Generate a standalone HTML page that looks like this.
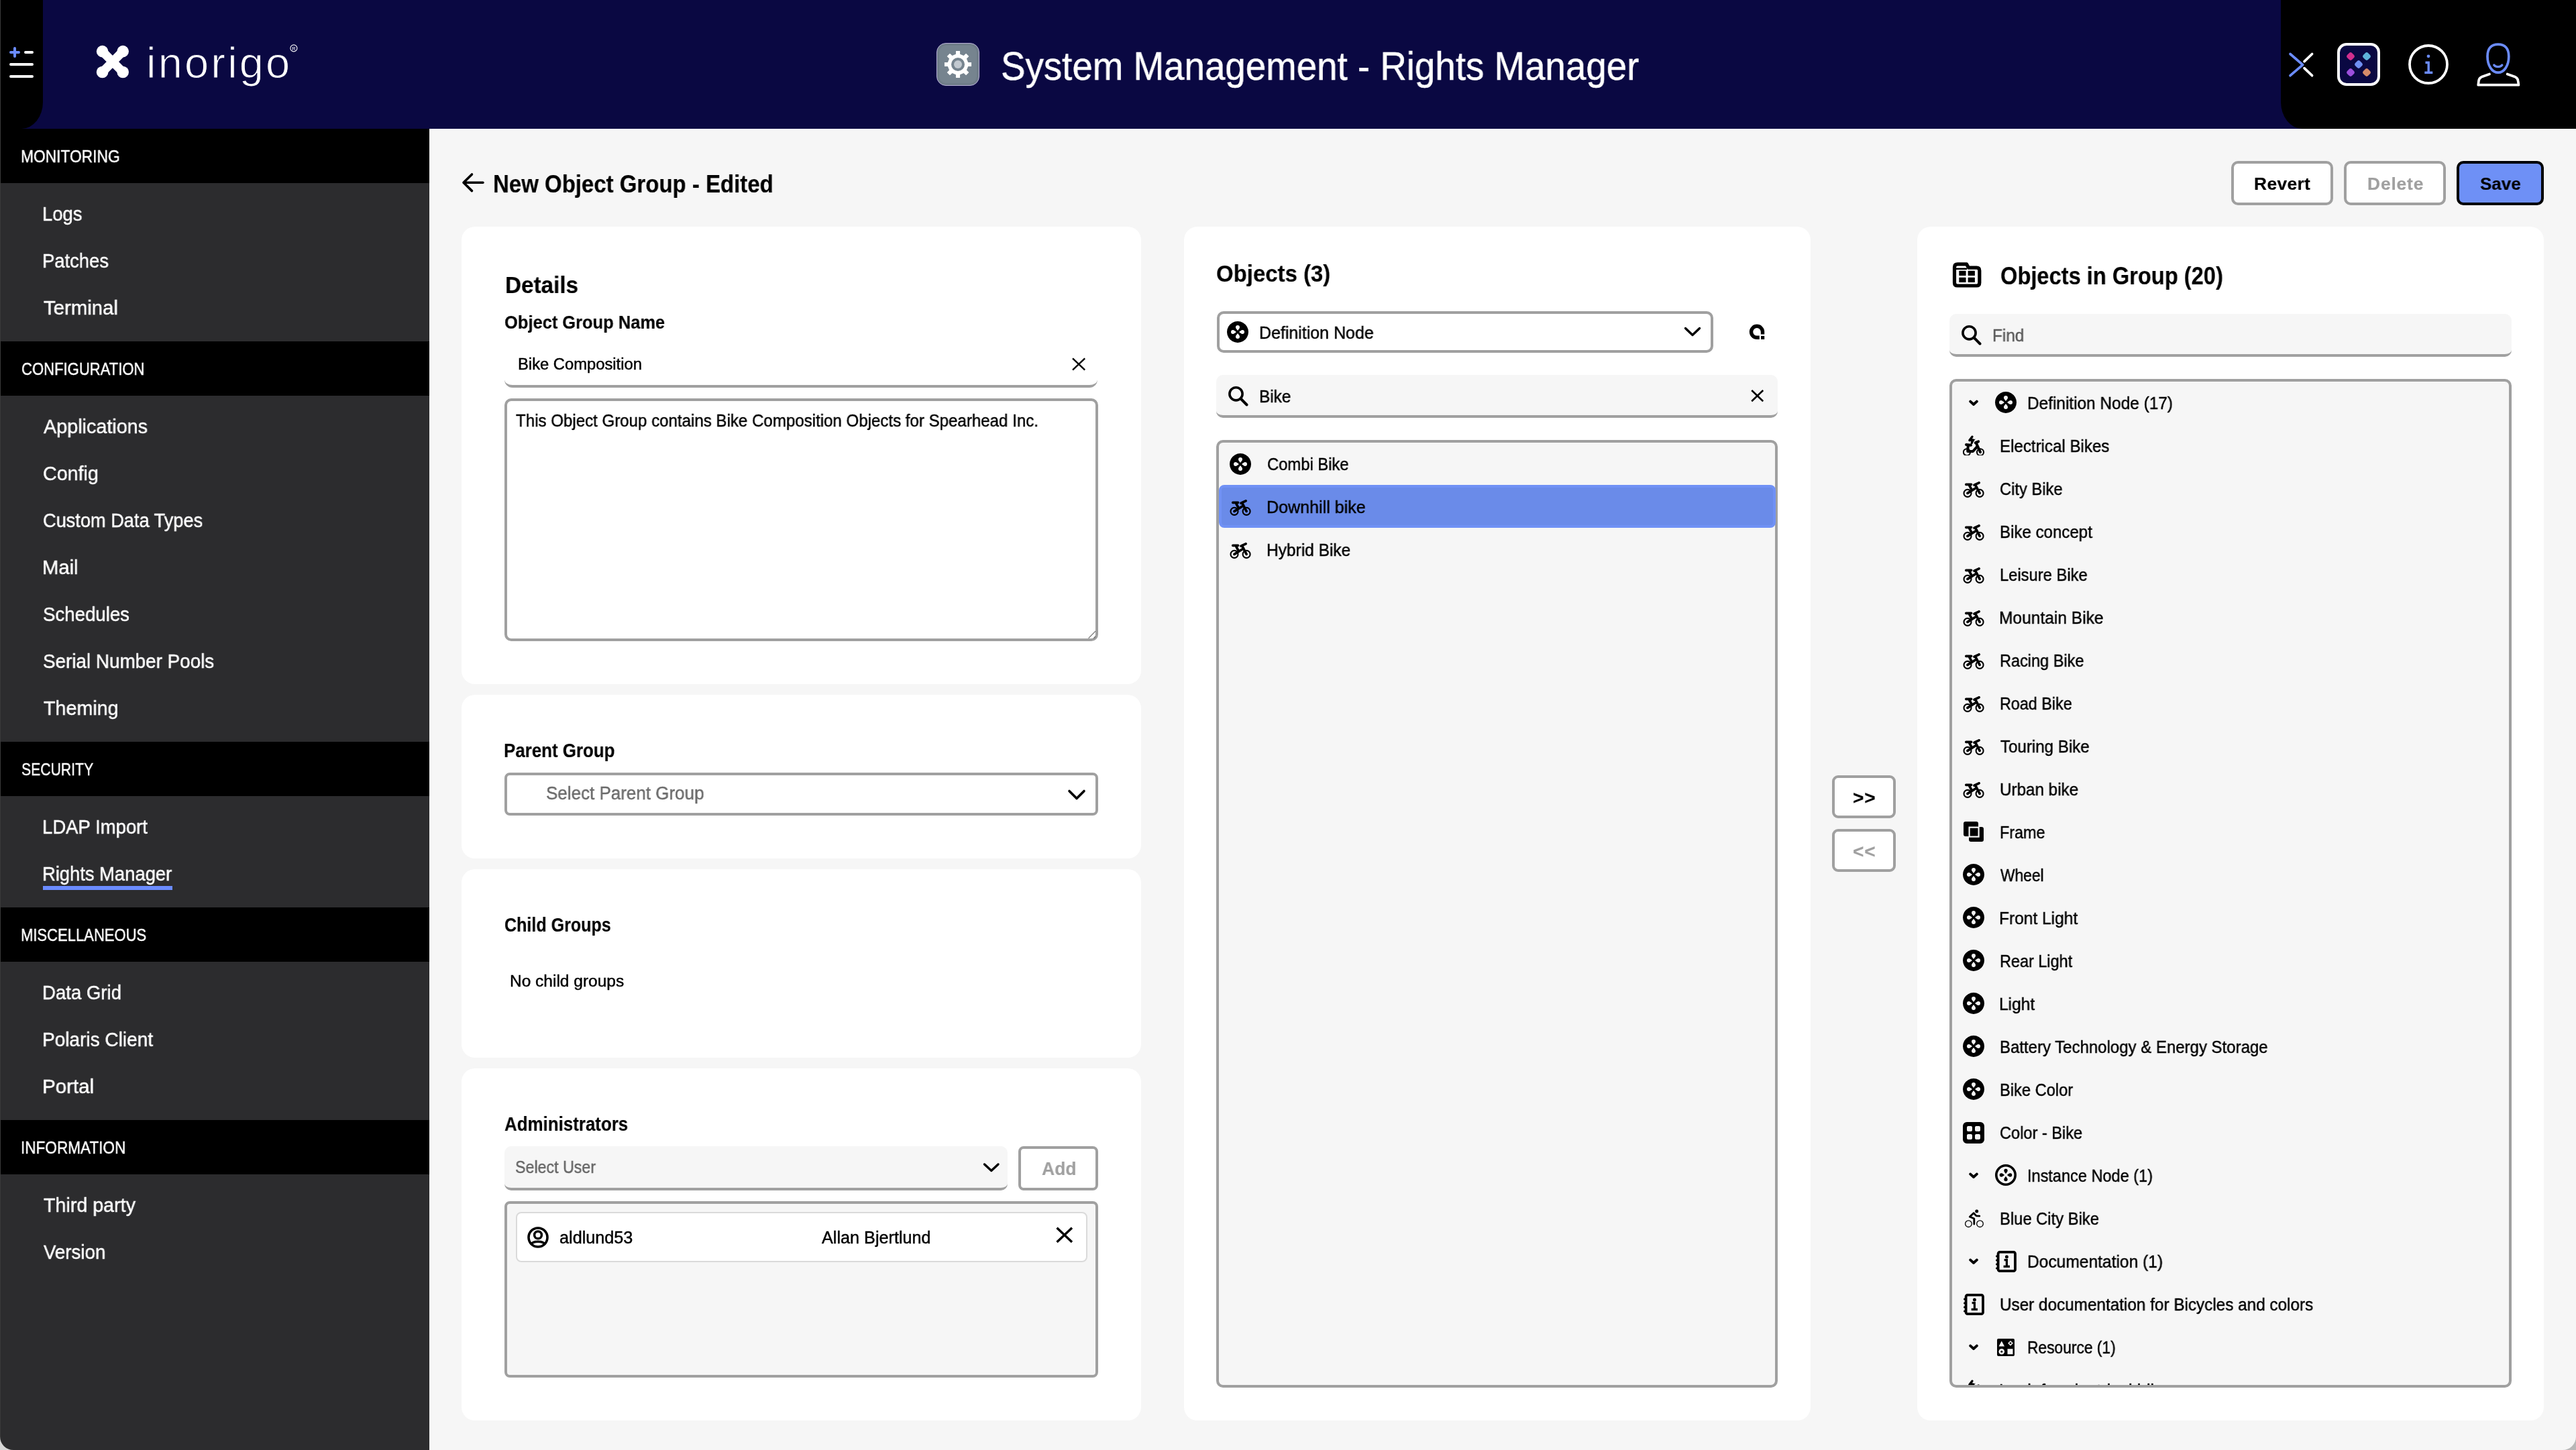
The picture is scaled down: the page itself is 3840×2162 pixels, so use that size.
<!DOCTYPE html>
<html><head><meta charset="utf-8"><title>System Management - Rights Manager</title>
<style>
html,body{margin:0;padding:0;width:3840px;height:2162px;overflow:hidden;background:#f6f6f6;font-family:"Liberation Sans",sans-serif;}
.a{position:absolute;box-sizing:border-box;}
.t{position:absolute;white-space:pre;font-family:"Liberation Sans",sans-serif;will-change:transform;}
svg{position:absolute;overflow:visible;}
</style></head><body>
<svg width="0" height="0" style="position:absolute;left:0;top:0"><defs><symbol id="i-def" viewBox="0 0 32 32"><path fill-rule="evenodd" d="M16 0a16 16 0 1 0 0.001 0ZM16.00 13.90C14.35 11.70 13.00 10.60 13.00 9.00A3.0 3.0 0 0 1 19.00 9.00C19.00 10.60 17.65 11.70 16.00 13.90ZM18.10 16.00C20.30 14.35 21.40 13.00 23.00 13.00A3.0 3.0 0 0 1 23.00 19.00C21.40 19.00 20.30 17.65 18.10 16.00ZM16.00 18.10C17.65 20.30 19.00 21.40 19.00 23.00A3.0 3.0 0 0 1 13.00 23.00C13.00 21.40 14.35 20.30 16.00 18.10ZM13.90 16.00C11.70 17.65 10.60 19.00 9.00 19.00A3.0 3.0 0 0 1 9.00 13.00C10.60 13.00 11.70 14.35 13.90 16.00Z" fill="#000"/></symbol><symbol id="i-inst" viewBox="0 0 32 32"><circle cx="16" cy="16" r="14.2" fill="none" stroke="#000" stroke-width="3.6"/><path d="M16.00 14.20C14.52 12.00 13.30 11.00 13.30 9.40A2.7 2.7 0 0 1 18.70 9.40C18.70 11.00 17.48 12.00 16.00 14.20ZM17.80 16.00C20.00 14.52 21.00 13.30 22.60 13.30A2.7 2.7 0 0 1 22.60 18.70C21.00 18.70 20.00 17.48 17.80 16.00ZM16.00 17.80C17.48 20.00 18.70 21.00 18.70 22.60A2.7 2.7 0 0 1 13.30 22.60C13.30 21.00 14.52 20.00 16.00 17.80ZM14.20 16.00C12.00 17.48 11.00 18.70 9.40 18.70A2.7 2.7 0 0 1 9.40 13.30C11.00 13.30 12.00 14.52 14.20 16.00Z" fill="#000"/></symbol><symbol id="i-bike" viewBox="0 0 32 24"><g fill="none" stroke="#000" stroke-linecap="round"><circle cx="7" cy="17.4" r="5.5" stroke-width="2.1"/><circle cx="25.1" cy="17.4" r="5.5" stroke-width="2.1"/><path d="M4.8 4.3H12.6M9.5 5.4L13.2 12.4M7 17.4L20.3 9M17 5.2L24.1 1.8M19.5 6.6L25.1 17.4" stroke-width="3.7"/></g></symbol><symbol id="i-ebike" viewBox="0 0 32 32"><g fill="none" stroke="#000" stroke-linecap="round" stroke-linejoin="round"><circle cx="5.9" cy="27.2" r="5" stroke-width="2.1"/><circle cx="26" cy="27.2" r="5" stroke-width="2.1"/><path d="M5 16L12 16.8M7.8 17L7.2 26H15L22 18.2M18.8 13.2L23.2 11.3M20.5 15.2L26 27.2" stroke-width="4"/></g><path d="M13.9 4.2L9.9 9.6L15.2 8.9L13.2 13.6" fill="none" stroke="#000" stroke-width="3.4" stroke-linejoin="round" stroke-linecap="round"/><path d="M11 9.8L18.8 7.6L14 13.8Z" fill="#000"/></symbol><symbol id="i-frame" viewBox="0 0 32 32"><rect x="1" y="0" width="22" height="22" rx="3" fill="#000"/><rect x="9" y="8" width="22" height="22" rx="3" fill="#000"/><rect x="9.6" y="8.6" width="14" height="14" fill="none" stroke="#f6f6f6" stroke-width="2.2"/></symbol><symbol id="i-grid" viewBox="0 0 32 32"><path fill-rule="evenodd" fill="#000" d="M6 0H26A6 6 0 0 1 32 6V26A6 6 0 0 1 26 32H6A6 6 0 0 1 0 26V6A6 6 0 0 1 6 0ZM8 6H12A2 2 0 0 1 14 8V12A2 2 0 0 1 12 14H8A2 2 0 0 1 6 12V8A2 2 0 0 1 8 6ZM20 6H24A2 2 0 0 1 26 8V12A2 2 0 0 1 24 14H20A2 2 0 0 1 18 12V8A2 2 0 0 1 20 6ZM8 18H12A2 2 0 0 1 14 20V24A2 2 0 0 1 12 26H8A2 2 0 0 1 6 24V20A2 2 0 0 1 8 18ZM20 18H24A2 2 0 0 1 26 20V24A2 2 0 0 1 24 26H20A2 2 0 0 1 18 24V20A2 2 0 0 1 20 18Z"/></symbol><symbol id="i-doc" viewBox="0 0 32 32"><rect x="4.6" y="1.9" width="25.4" height="28.3" rx="2.5" fill="none" stroke="#000" stroke-width="3.8"/><g fill="#000"><circle cx="2.6" cy="8" r="1.6"/><circle cx="2.6" cy="14" r="1.6"/><circle cx="2.6" cy="20" r="1.6"/><circle cx="2.6" cy="26" r="1.6"/><circle cx="17.4" cy="8.9" r="2.5"/></g><path d="M13.6 13.6H17.4V23.4M12.6 23.4H22" fill="none" stroke="#000" stroke-width="3.2"/></symbol><symbol id="i-res" viewBox="0 0 32 32"><rect x="3" y="3" width="26" height="26" rx="2" fill="#000"/><path d="M5.5 14.6L9.8 6.5L14.1 14.6Z M23 5.9L26.9 9.8L23 13.7L19.1 9.8Z M18.5 18.2H26.5V26.2H18.5Z" fill="#f6f6f6"/><circle cx="9.8" cy="22.2" r="4.3" fill="#f6f6f6"/><circle cx="9.8" cy="22.2" r="1.5" fill="#000"/><path d="M23 8L24.8 9.8L23 11.6L21.2 9.8Z" fill="#000"/></symbol><symbol id="i-cyc" viewBox="0 0 32 32"><g fill="none" stroke="#000"><circle cx="8.4" cy="23.7" r="4.8" stroke-width="1.3"/><circle cx="25.5" cy="23.7" r="4.8" stroke-width="1.3"/><path d="M10.3 13.3L16.1 7.8L20 11.9L24.8 12.1M11.7 13.8L16.8 16L16.8 24.2" stroke-width="2.8" stroke-linecap="round" stroke-linejoin="round"/></g><circle cx="20.7" cy="5.1" r="2.5" fill="#000"/></symbol><symbol id="i-search" viewBox="0 0 32 32"><circle cx="13.5" cy="13.3" r="9.6" fill="none" stroke="#000" stroke-width="3.6"/><path d="M20.6 20.5L29.5 29.5" stroke="#000" stroke-width="4" stroke-linecap="round"/></symbol><symbol id="i-chev" viewBox="0 0 16 10"><path d="M3.2 2.6L8 7L12.8 2.6" fill="none" stroke="#000" stroke-width="3.9" stroke-linecap="round" stroke-linejoin="round"/></symbol></defs></svg>
<div class="a" style="left:0px;top:0px;width:3840px;height:192px;background:#0a0842"></div>
<div class="a" style="left:0px;top:0px;width:64px;height:192px;background:#000;border-bottom-right-radius:32px 40px"></div>
<div class="a" style="left:3400px;top:0px;width:440px;height:192px;background:#000;border-bottom-left-radius:32px 40px"></div>
<svg style="left:0px;top:0px;" width="64" height="192" viewBox="0 0 64 192"><g stroke-linecap="round" stroke-width="4" fill="none"><path d="M16 78H28M22 72V84" stroke="#6b8cff"/><path d="M38 78H48M16 96H48M16 114H48" stroke="#fff"/></g></svg>
<svg style="left:136px;top:60px;" width="64" height="64" viewBox="136 60 64 64"><g fill="#fff"><circle cx="152.6" cy="76.6" r="8.8"/><circle cx="183.2" cy="76.6" r="8.8"/><circle cx="152.6" cy="107.5" r="8.8"/><circle cx="183.2" cy="107.5" r="8.8"/></g><path d="M152.6 76.6L183.2 107.5M183.2 76.6L152.6 107.5" stroke="#fff" stroke-width="13"/></svg>
<div class="t" style="left:217.70px;top:61.13px;font-size:65px;line-height:65px;font-weight:400;color:#fff;letter-spacing:3.187px;-webkit-text-stroke-width:0.45px;-webkit-text-stroke:1.1px #0a0842;">inorigo</div>
<svg style="left:428px;top:62px;" width="20" height="20" viewBox="428 62 20 20"><circle cx="437.9" cy="71.9" r="5" fill="none" stroke="#fff" stroke-width="1.1"/><text x="435.3" y="74.9" font-size="7.5" font-family="Liberation Sans" fill="#fff">R</text></svg>
<div class="a" style="left:1396px;top:64px;width:64px;height:64px;background:#76848f;border:1.5px solid #b6aed6;border-radius:14px;box-shadow:inset 0 0 0 3px #6f7d88"></div>
<svg style="left:1396px;top:64px;" width="64" height="64" viewBox="1396 64 64 64"><path d="M1424.88 80.82 L1424.97 75.93 L1431.03 75.93 L1431.12 80.82 L1436.53 83.06 L1440.05 79.66 L1444.34 83.95 L1440.94 87.47 L1443.18 92.88 L1448.07 92.97 L1448.07 99.03 L1443.18 99.12 L1440.94 104.53 L1444.34 108.05 L1440.05 112.34 L1436.53 108.94 L1431.12 111.18 L1431.03 116.07 L1424.97 116.07 L1424.88 111.18 L1419.47 108.94 L1415.95 112.34 L1411.66 108.05 L1415.06 104.53 L1412.82 99.12 L1407.93 99.03 L1407.93 92.97 L1412.82 92.88 L1415.06 87.47 L1411.66 83.95 L1415.95 79.66 L1419.47 83.06Z" fill="#fff"/><circle cx="1428" cy="96" r="10" fill="#76848f"/><circle cx="1428" cy="96" r="6" fill="#c2c9d0"/></svg>
<div class="t" style="left:1492.14px;top:70.29px;font-size:58.7px;line-height:58.7px;font-weight:400;color:#fff;letter-spacing:0.000px;transform:scaleX(0.9318);transform-origin:0 0;-webkit-text-stroke-width:0.45px;">System Management - Rights Manager</div>
<svg style="left:3400px;top:60px;" width="380" height="80" viewBox="3400 60 380 80"><g fill="none" stroke-linecap="round" stroke-linejoin="round" stroke-width="3.7"><path d="M3414 80.5L3432.7 96.6L3414 112.7" stroke="#6b8cff"/><path d="M3446.6 80.5L3435 91.6M3435 101.6L3446.6 112.7" stroke="#fff"/></g><rect x="3486" y="66" width="60" height="60" rx="12" fill="#0a0842" stroke="#fff" stroke-width="4"/><g><rect x="3499" y="79" width="10" height="10" rx="3.2" fill="#d12f8e" transform="rotate(45 3504 84)"/><rect x="3523" y="79" width="10" height="10" rx="3.2" fill="#5eb3d9" transform="rotate(45 3528 84)"/><rect x="3511" y="91" width="10" height="10" rx="3.2" fill="#6f8ff2" transform="rotate(45 3516 96)"/><rect x="3499" y="103" width="10" height="10" rx="3.2" fill="#9c4fdc" transform="rotate(45 3504 108)"/><rect x="3523" y="103" width="10" height="10" rx="3.2" fill="#d58b69" transform="rotate(45 3528 108)"/></g><circle cx="3620" cy="96" r="28" fill="none" stroke="#fff" stroke-width="3.8"/><circle cx="3620" cy="83.8" r="2.4" fill="#6b8cff"/><path d="M3615.5 93.3H3620.2V108.3M3614.3 108.3H3626.3" fill="none" stroke="#6b8cff" stroke-width="3.4"/><path d="M3723.9 66.2C3714 66.2 3708 72 3708 84C3708 98 3715 108.2 3723.9 108.2C3732.8 108.2 3739.8 98 3739.8 84C3739.8 72 3733.8 66.2 3723.9 66.2Z" fill="none" stroke="#6b8cff" stroke-width="3.7"/><path d="M3717.8 97C3720.5 100.5 3727 100.5 3729.8 97" fill="none" stroke="#6b8cff" stroke-width="3.4" stroke-linecap="round"/><path d="M3711 110.5L3699 114.8C3696.5 116 3695.3 118 3695 120.5L3694.2 126.7H3754.5L3753.6 120.5C3753.3 118 3752.1 116 3749.6 114.8L3737.6 110.5" fill="none" stroke="#fff" stroke-width="3.7" stroke-linejoin="round" stroke-linecap="round"/></svg>
<div class="a" style="left:0px;top:192px;width:640px;height:1970px;background:#2c2c2e"></div>
<div class="a" style="left:0px;top:192.0px;width:640px;height:80.7px;background:#000"></div>
<div class="t" style="left:30.61px;top:220.50px;font-size:25.51px;line-height:25.51px;font-weight:400;color:#fff;letter-spacing:0.000px;transform:scaleX(0.8932);transform-origin:0 0;-webkit-text-stroke-width:0.45px;">MONITORING</div>
<div class="t" style="left:63.37px;top:304.15px;font-size:30.0px;line-height:30.0px;font-weight:400;color:#fff;letter-spacing:0.000px;transform:scaleX(0.9153);transform-origin:0 0;-webkit-text-stroke-width:0.45px;">Logs</div>
<div class="t" style="left:63.37px;top:374.15px;font-size:30.0px;line-height:30.0px;font-weight:400;color:#fff;letter-spacing:0.000px;transform:scaleX(0.9127);transform-origin:0 0;-webkit-text-stroke-width:0.45px;">Patches</div>
<div class="t" style="left:65.20px;top:444.15px;font-size:30.0px;line-height:30.0px;font-weight:400;color:#fff;letter-spacing:0.000px;transform:scaleX(0.9785);transform-origin:0 0;-webkit-text-stroke-width:0.45px;">Terminal</div>
<div class="a" style="left:0px;top:509.0px;width:640px;height:80.7px;background:#000"></div>
<div class="t" style="left:31.53px;top:537.50px;font-size:25.51px;line-height:25.51px;font-weight:400;color:#fff;letter-spacing:0.000px;transform:scaleX(0.8654);transform-origin:0 0;-webkit-text-stroke-width:0.45px;">CONFIGURATION</div>
<div class="t" style="left:65.20px;top:621.15px;font-size:30.0px;line-height:30.0px;font-weight:400;color:#fff;letter-spacing:0.000px;transform:scaleX(0.9586);transform-origin:0 0;-webkit-text-stroke-width:0.45px;">Applications</div>
<div class="t" style="left:64.24px;top:691.15px;font-size:30.0px;line-height:30.0px;font-weight:400;color:#fff;letter-spacing:0.000px;transform:scaleX(0.9556);transform-origin:0 0;-webkit-text-stroke-width:0.45px;">Config</div>
<div class="t" style="left:64.29px;top:761.15px;font-size:30.0px;line-height:30.0px;font-weight:400;color:#fff;letter-spacing:0.000px;transform:scaleX(0.9058);transform-origin:0 0;-webkit-text-stroke-width:0.45px;">Custom Data Types</div>
<div class="t" style="left:63.25px;top:831.15px;font-size:30.0px;line-height:30.0px;font-weight:400;color:#fff;letter-spacing:0.000px;transform:scaleX(0.9739);transform-origin:0 0;-webkit-text-stroke-width:0.45px;">Mail</div>
<div class="t" style="left:64.28px;top:901.15px;font-size:30.0px;line-height:30.0px;font-weight:400;color:#fff;letter-spacing:0.000px;transform:scaleX(0.9211);transform-origin:0 0;-webkit-text-stroke-width:0.45px;">Schedules</div>
<div class="t" style="left:64.27px;top:971.15px;font-size:30.0px;line-height:30.0px;font-weight:400;color:#fff;letter-spacing:0.000px;transform:scaleX(0.9278);transform-origin:0 0;-webkit-text-stroke-width:0.45px;">Serial Number Pools</div>
<div class="t" style="left:65.20px;top:1041.15px;font-size:30.0px;line-height:30.0px;font-weight:400;color:#fff;letter-spacing:0.000px;transform:scaleX(0.9562);transform-origin:0 0;-webkit-text-stroke-width:0.45px;">Theming</div>
<div class="a" style="left:0px;top:1106.0px;width:640px;height:80.7px;background:#000"></div>
<div class="t" style="left:31.57px;top:1134.50px;font-size:25.51px;line-height:25.51px;font-weight:400;color:#fff;letter-spacing:0.000px;transform:scaleX(0.8310);transform-origin:0 0;-webkit-text-stroke-width:0.45px;">SECURITY</div>
<div class="t" style="left:63.37px;top:1218.15px;font-size:30.0px;line-height:30.0px;font-weight:400;color:#fff;letter-spacing:0.000px;transform:scaleX(0.9173);transform-origin:0 0;-webkit-text-stroke-width:0.45px;">LDAP Import</div>
<div class="t" style="left:63.38px;top:1288.15px;font-size:30.0px;line-height:30.0px;font-weight:400;color:#fff;letter-spacing:0.000px;transform:scaleX(0.9124);transform-origin:0 0;-webkit-text-stroke-width:0.45px;">Rights Manager</div>
<div class="a" style="left:64px;top:1320.9px;width:193px;height:6px;background:#6b8cff"></div>
<div class="a" style="left:0px;top:1353.0px;width:640px;height:80.7px;background:#000"></div>
<div class="t" style="left:30.67px;top:1381.50px;font-size:25.51px;line-height:25.51px;font-weight:400;color:#fff;letter-spacing:0.000px;transform:scaleX(0.8634);transform-origin:0 0;-webkit-text-stroke-width:0.45px;">MISCELLANEOUS</div>
<div class="t" style="left:63.36px;top:1465.15px;font-size:30.0px;line-height:30.0px;font-weight:400;color:#fff;letter-spacing:0.000px;transform:scaleX(0.9190);transform-origin:0 0;-webkit-text-stroke-width:0.45px;">Data Grid</div>
<div class="t" style="left:63.33px;top:1535.15px;font-size:30.0px;line-height:30.0px;font-weight:400;color:#fff;letter-spacing:0.000px;transform:scaleX(0.9339);transform-origin:0 0;-webkit-text-stroke-width:0.45px;">Polaris Client</div>
<div class="t" style="left:63.23px;top:1605.15px;font-size:30.0px;line-height:30.0px;font-weight:400;color:#fff;letter-spacing:0.000px;transform:scaleX(0.9839);transform-origin:0 0;-webkit-text-stroke-width:0.45px;">Portal</div>
<div class="a" style="left:0px;top:1670.0px;width:640px;height:80.7px;background:#000"></div>
<div class="t" style="left:30.63px;top:1698.50px;font-size:25.51px;line-height:25.51px;font-weight:400;color:#fff;letter-spacing:0.000px;transform:scaleX(0.8852);transform-origin:0 0;-webkit-text-stroke-width:0.45px;">INFORMATION</div>
<div class="t" style="left:65.20px;top:1782.15px;font-size:30.0px;line-height:30.0px;font-weight:400;color:#fff;letter-spacing:0.000px;transform:scaleX(0.9548);transform-origin:0 0;-webkit-text-stroke-width:0.45px;">Third party</div>
<div class="t" style="left:65.20px;top:1852.15px;font-size:30.0px;line-height:30.0px;font-weight:400;color:#fff;letter-spacing:0.000px;transform:scaleX(0.9219);transform-origin:0 0;-webkit-text-stroke-width:0.45px;">Version</div>
<svg style="left:680px;top:250px;" width="50" height="44" viewBox="680 250 50 44"><path d="M720 272.3H691.5M703.5 260L691 272.3L703.5 284.6" fill="none" stroke="#000" stroke-width="3.6" stroke-linecap="round" stroke-linejoin="round"/></svg>
<div class="t" style="left:734.72px;top:255.82px;font-size:37.1px;line-height:37.1px;font-weight:700;color:#000;letter-spacing:0.000px;transform:scaleX(0.8894);transform-origin:0 0;-webkit-text-stroke-width:0.2px;">New Object Group - Edited</div>
<div class="a" style="left:3326px;top:240px;width:152px;height:66px;background:#fff;border:4px solid #a0a0a0;border-radius:10px"></div>
<div class="t" style="left:3360.00px;top:260.87px;font-size:26.38px;line-height:26.38px;font-weight:700;color:#000;letter-spacing:0.337px;-webkit-text-stroke-width:0.2px;">Revert</div>
<div class="a" style="left:3494px;top:240px;width:152px;height:66px;background:#fff;border:4px solid #a0a0a0;border-radius:10px"></div>
<div class="t" style="left:3528.60px;top:260.87px;font-size:26.38px;line-height:26.38px;font-weight:700;color:#a0a0a0;letter-spacing:0.841px;-webkit-text-stroke-width:0.2px;">Delete</div>
<div class="a" style="left:3662px;top:240px;width:130px;height:66px;background:#6e90f6;border:4px solid #000;border-radius:10px"></div>
<div class="t" style="left:3697.00px;top:260.87px;font-size:26.38px;line-height:26.38px;font-weight:700;color:#000;letter-spacing:0.000px;transform:scaleX(0.9848);transform-origin:0 0;-webkit-text-stroke-width:0.2px;">Save</div>
<div class="a" style="left:688px;top:338px;width:1013px;height:682px;background:#fff;border-radius:20px"></div>
<div class="a" style="left:688px;top:1036px;width:1013px;height:244px;background:#fff;border-radius:20px"></div>
<div class="a" style="left:688px;top:1296px;width:1013px;height:281px;background:#fff;border-radius:20px"></div>
<div class="a" style="left:688px;top:1593px;width:1013px;height:525px;background:#fff;border-radius:20px"></div>
<div class="a" style="left:1765px;top:338px;width:934px;height:1780px;background:#fff;border-radius:20px"></div>
<div class="a" style="left:2858px;top:338px;width:934px;height:1780px;background:#fff;border-radius:20px"></div>
<div class="t" style="left:752.66px;top:408.12px;font-size:34.35px;line-height:34.35px;font-weight:700;color:#000;letter-spacing:0.000px;transform:scaleX(0.9682);transform-origin:0 0;-webkit-text-stroke-width:0.2px;">Details</div>
<div class="t" style="left:752.16px;top:468.29px;font-size:26.96px;line-height:26.96px;font-weight:700;color:#000;letter-spacing:0.000px;transform:scaleX(0.9448);transform-origin:0 0;-webkit-text-stroke-width:0.2px;">Object Group Name</div>
<div class="a" style="left:752px;top:518px;width:884px;height:60px;border-bottom:4px solid #a0a0a0;border-radius:0 0 12px 12px"></div>
<div class="t" style="left:772.30px;top:531.05px;font-size:23.77px;line-height:23.77px;font-weight:400;color:#000;letter-spacing:0.000px;transform:scaleX(1.0000);transform-origin:0 0;-webkit-text-stroke-width:0.45px;">Bike Composition</div>
<svg style="left:1590px;top:525px;" width="36" height="36" viewBox="1590 525 36 36"><path d="M1599 534.3L1617.2 551.7M1617.2 534.3L1599 551.7" stroke="#000" stroke-width="2.4" fill="none"/></svg>
<div class="a" style="left:752px;top:594px;width:885px;height:362px;border:4px solid #a0a0a0;border-radius:10px"></div>
<div class="t" style="left:769.00px;top:614.54px;font-size:25.22px;line-height:25.22px;font-weight:400;color:#000;letter-spacing:0.000px;transform:scaleX(0.9548);transform-origin:0 0;-webkit-text-stroke-width:0.45px;">This Object Group contains Bike Composition Objects for Spearhead Inc.</div>
<svg style="left:1610px;top:930px;" width="26" height="26" viewBox="1610 930 26 26"><path d="M1622.6 951.6L1633 941.2M1630.3 951.8L1633 949" stroke="#6a6a6a" stroke-width="1.2" fill="none"/></svg>
<div class="t" style="left:750.67px;top:1104.07px;font-size:29.86px;line-height:29.86px;font-weight:700;color:#000;letter-spacing:0.000px;transform:scaleX(0.8671);transform-origin:0 0;-webkit-text-stroke-width:0.2px;">Parent Group</div>
<div class="a" style="left:752px;top:1152px;width:885px;height:64px;border:4px solid #a0a0a0;border-radius:8px"></div>
<div class="t" style="left:813.83px;top:1170.41px;font-size:26.81px;line-height:26.81px;font-weight:400;color:#6b6b6b;letter-spacing:0.000px;transform:scaleX(0.9697);transform-origin:0 0;-webkit-text-stroke-width:0.45px;">Select Parent Group</div>
<svg style="left:1585px;top:1170px;" width="40" height="30" viewBox="1585 1170 40 30"><path d="M1594 1179.5L1605 1190.5L1616 1179.5" stroke="#000" stroke-width="3.6" fill="none" stroke-linecap="round" stroke-linejoin="round"/></svg>
<div class="t" style="left:751.56px;top:1364.07px;font-size:29.86px;line-height:29.86px;font-weight:700;color:#000;letter-spacing:0.000px;transform:scaleX(0.8390);transform-origin:0 0;-webkit-text-stroke-width:0.2px;">Child Groups</div>
<div class="t" style="left:760.00px;top:1451.35px;font-size:24.49px;line-height:24.49px;font-weight:400;color:#000;letter-spacing:0.000px;transform:scaleX(0.9983);transform-origin:0 0;-webkit-text-stroke-width:0.45px;">No child groups</div>
<div class="t" style="left:751.90px;top:1661.84px;font-size:28.7px;line-height:28.7px;font-weight:700;color:#000;letter-spacing:0.000px;transform:scaleX(0.9026);transform-origin:0 0;-webkit-text-stroke-width:0.2px;">Administrators</div>
<div class="a" style="left:752px;top:1709px;width:750px;height:66px;background:#f6f6f6;border-bottom:4px solid #a0a0a0;border-radius:10px"></div>
<div class="t" style="left:768.19px;top:1727.70px;font-size:25.51px;line-height:25.51px;font-weight:400;color:#666666;letter-spacing:0.000px;transform:scaleX(0.9109);transform-origin:0 0;-webkit-text-stroke-width:0.45px;">Select User</div>
<svg style="left:1460px;top:1728px;" width="36" height="26" viewBox="1460 1728 36 26"><path d="M1467.5 1736L1477.8 1745.5L1488 1736" stroke="#000" stroke-width="3.4" fill="none" stroke-linecap="round" stroke-linejoin="round"/></svg>
<div class="a" style="left:1518px;top:1709px;width:119px;height:66px;background:#fff;border:4px solid #a0a0a0;border-radius:8px"></div>
<div class="t" style="left:1552.80px;top:1728.60px;font-size:27.54px;line-height:27.54px;font-weight:700;color:#a0a0a0;letter-spacing:0.000px;transform:scaleX(0.9613);transform-origin:0 0;-webkit-text-stroke-width:0.2px;">Add</div>
<div class="a" style="left:752px;top:1791px;width:885px;height:263px;background:#f6f6f6;border:4px solid #a0a0a0;border-radius:8px"></div>
<div class="a" style="left:769px;top:1807px;width:852px;height:75px;background:#fff;border:2.5px solid #dadada;border-radius:8px"></div>
<svg style="left:780px;top:1822px;" width="46" height="46" viewBox="780 1822 46 46"><circle cx="802" cy="1845" r="14" fill="none" stroke="#000" stroke-width="3.6"/><circle cx="802" cy="1841.4" r="5.4" fill="none" stroke="#000" stroke-width="3.5"/><path d="M791 1855.8C795 1849.8 809 1849.8 813 1855.8" fill="none" stroke="#000" stroke-width="3.4"/></svg>
<div class="t" style="left:834.20px;top:1832.84px;font-size:25.22px;line-height:25.22px;font-weight:400;color:#000;letter-spacing:0.000px;transform:scaleX(0.9985);transform-origin:0 0;-webkit-text-stroke-width:0.45px;">aldlund53</div>
<div class="t" style="left:1225.00px;top:1832.84px;font-size:25.22px;line-height:25.22px;font-weight:400;color:#000;letter-spacing:0.000px;transform:scaleX(0.9994);transform-origin:0 0;-webkit-text-stroke-width:0.45px;">Allan Bjertlund</div>
<svg style="left:1568px;top:1824px;" width="38" height="36" viewBox="1568 1824 38 36"><path d="M1575.5 1830.8L1598 1852M1598 1830.8L1575.5 1852" stroke="#000" stroke-width="3.4" fill="none"/></svg>
<div class="t" style="left:1813.08px;top:391.23px;font-size:35.65px;line-height:35.65px;font-weight:700;color:#000;letter-spacing:0.000px;transform:scaleX(0.9242);transform-origin:0 0;-webkit-text-stroke-width:0.2px;">Objects (3)</div>
<div class="a" style="left:1814px;top:464px;width:740px;height:62px;background:#fff;border:4px solid #a0a0a0;border-radius:10px"></div>
<svg style="left:1828.8px;top:479px" width="32" height="32"><use href="#i-def" x="0" y="0" width="32" height="32"/></svg>
<div class="t" style="left:1877.32px;top:483.94px;font-size:25.22px;line-height:25.22px;font-weight:400;color:#000;letter-spacing:0.000px;transform:scaleX(0.9899);transform-origin:0 0;-webkit-text-stroke-width:0.45px;">Definition Node</div>
<svg style="left:2505px;top:482px;" width="36" height="24" viewBox="2505 482 36 24"><path d="M2512.5 489.5L2523 499.5L2533.5 489.5" stroke="#000" stroke-width="3.4" fill="none" stroke-linecap="round" stroke-linejoin="round"/></svg>
<svg style="left:2600px;top:478px;" width="40" height="34" viewBox="2600 478 40 34"><path d="M2622.8 503.3H2619A8.5 8.5 0 1 1 2627.5 494.8V498.6" fill="none" stroke="#000" stroke-width="5.4"/><rect x="2625" y="500.9" width="5.2" height="5.1" fill="#000"/></svg>
<div class="a" style="left:1813px;top:559px;width:837px;height:64px;background:#f6f6f6;border-bottom:4px solid #a0a0a0;border-radius:10px"></div>
<svg style="left:1828.8px;top:574px" width="32" height="32"><use href="#i-search" x="0" y="0" width="32" height="32"/></svg>
<div class="t" style="left:1877.26px;top:579.07px;font-size:25.07px;line-height:25.07px;font-weight:400;color:#000;letter-spacing:0.000px;transform:scaleX(0.9713);transform-origin:0 0;-webkit-text-stroke-width:0.45px;">Bike</div>
<svg style="left:2600px;top:575px;" width="36" height="30" viewBox="2600 575 36 30"><path d="M2611.2 582L2628.2 598.2M2628.2 582L2611.2 598.2" stroke="#000" stroke-width="2.6" fill="none"/></svg>
<div class="a" style="left:1813px;top:656px;width:837px;height:1413px;background:#f6f6f6;border:4px solid #a0a0a0;border-radius:10px"></div>
<div class="a" style="left:1817px;top:723px;width:829.5px;height:64px;background:#6a8be9;border:4px solid #7091f5;border-radius:8px"></div>
<svg style="left:1832.7px;top:676px" width="32" height="32"><use href="#i-def" x="0" y="0" width="32" height="32"/></svg>
<div class="t" style="left:1888.97px;top:679.58px;font-size:25.65px;line-height:25.65px;font-weight:400;color:#000;letter-spacing:0.000px;transform:scaleX(0.9273);transform-origin:0 0;-webkit-text-stroke-width:0.45px;">Combi Bike</div>
<svg style="left:1832.7px;top:745px" width="32" height="24"><use href="#i-bike" x="0" y="0" width="32" height="24"/></svg>
<div class="t" style="left:1887.94px;top:743.58px;font-size:25.65px;line-height:25.65px;font-weight:400;color:#000;letter-spacing:0.000px;transform:scaleX(0.9778);transform-origin:0 0;-webkit-text-stroke-width:0.45px;">Downhill bike</div>
<svg style="left:1832.7px;top:809px" width="32" height="24"><use href="#i-bike" x="0" y="0" width="32" height="24"/></svg>
<div class="t" style="left:1887.99px;top:807.58px;font-size:25.65px;line-height:25.65px;font-weight:400;color:#000;letter-spacing:0.000px;transform:scaleX(0.9555);transform-origin:0 0;-webkit-text-stroke-width:0.45px;">Hybrid Bike</div>
<div class="a" style="left:2731px;top:1156px;width:95px;height:64px;background:#fff;border:4px solid #a0a0a0;border-radius:9px"></div>
<div class="a" style="left:2731px;top:1236px;width:95px;height:64px;background:#fff;border:4px solid #a0a0a0;border-radius:9px"></div>
<div class="t" style="left:2761.80px;top:1175.82px;font-size:28px;line-height:28px;font-weight:700;color:#000;letter-spacing:0.848px;-webkit-text-stroke-width:0.2px;">&gt;&gt;</div>
<div class="t" style="left:2761.80px;top:1255.82px;font-size:28px;line-height:28px;font-weight:700;color:#a0a0a0;letter-spacing:0.848px;-webkit-text-stroke-width:0.2px;">&lt;&lt;</div>
<svg style="left:2905px;top:385px;" width="55" height="50" viewBox="2905 385 55 50"><path d="M2913.5 421.5V398.5C2913.5 395.5 2915.2 393.8 2918.2 393.8H2931.5L2934.5 399.2H2946.5C2949.2 399.2 2950.8 400.8 2950.8 403.5V421.5C2950.8 424.5 2949.2 426 2946.5 426H2918C2915.2 426 2913.5 424.5 2913.5 421.5Z" fill="none" stroke="#000" stroke-width="5.2" stroke-linejoin="round"/><path d="M2914 400.8H2932" stroke="#000" stroke-width="2.6"/><g fill="#000"><rect x="2920.3" y="403.8" width="10.3" height="7.3" rx="0.6"/><rect x="2933.6" y="403.8" width="10.3" height="7.3" rx="0.6"/><rect x="2920.3" y="413.8" width="10.3" height="7.3" rx="0.6"/><rect x="2933.6" y="413.8" width="10.3" height="7.3" rx="0.6"/></g></svg>
<div class="t" style="left:2982.01px;top:394.31px;font-size:36.52px;line-height:36.52px;font-weight:700;color:#000;letter-spacing:0.000px;transform:scaleX(0.8937);transform-origin:0 0;-webkit-text-stroke-width:0.2px;">Objects in Group (20)</div>
<div class="a" style="left:2906px;top:468px;width:838px;height:64px;background:#f6f6f6;border-bottom:4px solid #a0a0a0;border-radius:10px"></div>
<svg style="left:2921.5px;top:483px" width="32" height="32"><use href="#i-search" x="0" y="0" width="32" height="32"/></svg>
<div class="t" style="left:2970.16px;top:487.97px;font-size:25.07px;line-height:25.07px;font-weight:400;color:#5c5c5c;letter-spacing:0.000px;transform:scaleX(0.9713);transform-origin:0 0;-webkit-text-stroke-width:0.45px;">Find</div>
<div class="a" style="left:2906px;top:564.6px;width:838px;height:1504px;background:#f6f6f6;border:4px solid #a0a0a0;border-radius:10px"></div>
<div class="a" style="left:0;top:0;width:3840px;height:2162px;clip-path:inset(568.6px 0 97.5px 0)">
<svg style="left:2934px;top:595.6px" width="16" height="10"><use href="#i-chev" x="0" y="0" width="16" height="10"/></svg>
<svg style="left:2974px;top:583.8000000000001px" width="32" height="32"><use href="#i-def" x="0" y="0" width="32" height="32"/></svg>
<div class="t" style="left:3022.28px;top:588.92px;font-size:25.36px;line-height:25.36px;font-weight:400;color:#000;letter-spacing:0.000px;transform:scaleX(0.9622);transform-origin:0 0;-webkit-text-stroke-width:0.45px;">Definition Node (17)</div>
<svg style="left:2925.7px;top:647.3000000000001px" width="32" height="32"><use href="#i-ebike" x="0" y="0" width="32" height="32"/></svg>
<div class="t" style="left:2980.50px;top:652.92px;font-size:25.36px;line-height:25.36px;font-weight:400;color:#000;letter-spacing:0.000px;transform:scaleX(0.9501);transform-origin:0 0;-webkit-text-stroke-width:0.45px;">Electrical Bikes</div>
<svg style="left:2925.7px;top:717.6px" width="32" height="24"><use href="#i-bike" x="0" y="0" width="32" height="24"/></svg>
<div class="t" style="left:2981.46px;top:716.92px;font-size:25.36px;line-height:25.36px;font-weight:400;color:#000;letter-spacing:0.000px;transform:scaleX(0.9352);transform-origin:0 0;-webkit-text-stroke-width:0.45px;">City Bike</div>
<svg style="left:2925.7px;top:781.6px" width="32" height="24"><use href="#i-bike" x="0" y="0" width="32" height="24"/></svg>
<div class="t" style="left:2980.50px;top:780.92px;font-size:25.36px;line-height:25.36px;font-weight:400;color:#000;letter-spacing:0.000px;transform:scaleX(0.9493);transform-origin:0 0;-webkit-text-stroke-width:0.45px;">Bike concept</div>
<svg style="left:2925.7px;top:845.6px" width="32" height="24"><use href="#i-bike" x="0" y="0" width="32" height="24"/></svg>
<div class="t" style="left:2980.53px;top:844.92px;font-size:25.36px;line-height:25.36px;font-weight:400;color:#000;letter-spacing:0.000px;transform:scaleX(0.9366);transform-origin:0 0;-webkit-text-stroke-width:0.45px;">Leisure Bike</div>
<svg style="left:2925.7px;top:909.6px" width="32" height="24"><use href="#i-bike" x="0" y="0" width="32" height="24"/></svg>
<div class="t" style="left:2980.46px;top:908.92px;font-size:25.36px;line-height:25.36px;font-weight:400;color:#000;letter-spacing:0.000px;transform:scaleX(0.9683);transform-origin:0 0;-webkit-text-stroke-width:0.45px;">Mountain Bike</div>
<svg style="left:2925.7px;top:973.6px" width="32" height="24"><use href="#i-bike" x="0" y="0" width="32" height="24"/></svg>
<div class="t" style="left:2980.55px;top:972.92px;font-size:25.36px;line-height:25.36px;font-weight:400;color:#000;letter-spacing:0.000px;transform:scaleX(0.9273);transform-origin:0 0;-webkit-text-stroke-width:0.45px;">Racing Bike</div>
<svg style="left:2925.7px;top:1037.6px" width="32" height="24"><use href="#i-bike" x="0" y="0" width="32" height="24"/></svg>
<div class="t" style="left:2980.56px;top:1036.92px;font-size:25.36px;line-height:25.36px;font-weight:400;color:#000;letter-spacing:0.000px;transform:scaleX(0.9201);transform-origin:0 0;-webkit-text-stroke-width:0.45px;">Road Bike</div>
<svg style="left:2925.7px;top:1101.6px" width="32" height="24"><use href="#i-bike" x="0" y="0" width="32" height="24"/></svg>
<div class="t" style="left:2982.40px;top:1100.92px;font-size:25.36px;line-height:25.36px;font-weight:400;color:#000;letter-spacing:0.000px;transform:scaleX(0.9505);transform-origin:0 0;-webkit-text-stroke-width:0.45px;">Touring Bike</div>
<svg style="left:2925.7px;top:1165.6px" width="32" height="24"><use href="#i-bike" x="0" y="0" width="32" height="24"/></svg>
<div class="t" style="left:2981.44px;top:1164.92px;font-size:25.36px;line-height:25.36px;font-weight:400;color:#000;letter-spacing:0.000px;transform:scaleX(0.9558);transform-origin:0 0;-webkit-text-stroke-width:0.45px;">Urban bike</div>
<svg style="left:2925.7px;top:1224.6px" width="32" height="32"><use href="#i-frame" x="0" y="0" width="32" height="32"/></svg>
<div class="t" style="left:2980.56px;top:1228.92px;font-size:25.36px;line-height:25.36px;font-weight:400;color:#000;letter-spacing:0.000px;transform:scaleX(0.9207);transform-origin:0 0;-webkit-text-stroke-width:0.45px;">Frame</div>
<svg style="left:2925.7px;top:1287.8px" width="32" height="32"><use href="#i-def" x="0" y="0" width="32" height="32"/></svg>
<div class="t" style="left:2982.40px;top:1292.92px;font-size:25.36px;line-height:25.36px;font-weight:400;color:#000;letter-spacing:0.000px;transform:scaleX(0.8983);transform-origin:0 0;-webkit-text-stroke-width:0.45px;">Wheel</div>
<svg style="left:2925.7px;top:1351.8px" width="32" height="32"><use href="#i-def" x="0" y="0" width="32" height="32"/></svg>
<div class="t" style="left:2980.47px;top:1356.92px;font-size:25.36px;line-height:25.36px;font-weight:400;color:#000;letter-spacing:0.000px;transform:scaleX(0.9666);transform-origin:0 0;-webkit-text-stroke-width:0.45px;">Front Light</div>
<svg style="left:2925.7px;top:1415.8px" width="32" height="32"><use href="#i-def" x="0" y="0" width="32" height="32"/></svg>
<div class="t" style="left:2980.55px;top:1420.92px;font-size:25.36px;line-height:25.36px;font-weight:400;color:#000;letter-spacing:0.000px;transform:scaleX(0.9247);transform-origin:0 0;-webkit-text-stroke-width:0.45px;">Rear Light</div>
<svg style="left:2925.7px;top:1479.8px" width="32" height="32"><use href="#i-def" x="0" y="0" width="32" height="32"/></svg>
<div class="t" style="left:2980.47px;top:1484.92px;font-size:25.36px;line-height:25.36px;font-weight:400;color:#000;letter-spacing:0.000px;transform:scaleX(0.9670);transform-origin:0 0;-webkit-text-stroke-width:0.45px;">Light</div>
<svg style="left:2925.7px;top:1543.8px" width="32" height="32"><use href="#i-def" x="0" y="0" width="32" height="32"/></svg>
<div class="t" style="left:2980.51px;top:1548.92px;font-size:25.36px;line-height:25.36px;font-weight:400;color:#000;letter-spacing:0.000px;transform:scaleX(0.9459);transform-origin:0 0;-webkit-text-stroke-width:0.45px;">Battery Technology &amp; Energy Storage</div>
<svg style="left:2925.7px;top:1607.8px" width="32" height="32"><use href="#i-def" x="0" y="0" width="32" height="32"/></svg>
<div class="t" style="left:2980.53px;top:1612.92px;font-size:25.36px;line-height:25.36px;font-weight:400;color:#000;letter-spacing:0.000px;transform:scaleX(0.9331);transform-origin:0 0;-webkit-text-stroke-width:0.45px;">Bike Color</div>
<svg style="left:2925.7px;top:1672.6px" width="32" height="32"><use href="#i-grid" x="0" y="0" width="32" height="32"/></svg>
<div class="t" style="left:2981.47px;top:1676.92px;font-size:25.36px;line-height:25.36px;font-weight:400;color:#000;letter-spacing:0.000px;transform:scaleX(0.9297);transform-origin:0 0;-webkit-text-stroke-width:0.45px;">Color - Bike</div>
<svg style="left:2934px;top:1747.6px" width="16" height="10"><use href="#i-chev" x="0" y="0" width="16" height="10"/></svg>
<svg style="left:2974px;top:1735.8px" width="32" height="32"><use href="#i-inst" x="0" y="0" width="32" height="32"/></svg>
<div class="t" style="left:3022.34px;top:1740.92px;font-size:25.36px;line-height:25.36px;font-weight:400;color:#000;letter-spacing:0.000px;transform:scaleX(0.9277);transform-origin:0 0;-webkit-text-stroke-width:0.45px;">Instance Node (1)</div>
<svg style="left:2925.7px;top:1800.6px" width="32" height="32"><use href="#i-cyc" x="0" y="0" width="32" height="32"/></svg>
<div class="t" style="left:2980.52px;top:1804.92px;font-size:25.36px;line-height:25.36px;font-weight:400;color:#000;letter-spacing:0.000px;transform:scaleX(0.9376);transform-origin:0 0;-webkit-text-stroke-width:0.45px;">Blue City Bike</div>
<svg style="left:2934px;top:1875.6px" width="16" height="10"><use href="#i-chev" x="0" y="0" width="16" height="10"/></svg>
<svg style="left:2974px;top:1864.6px" width="32" height="32"><use href="#i-doc" x="0" y="0" width="32" height="32"/></svg>
<div class="t" style="left:3022.26px;top:1868.92px;font-size:25.36px;line-height:25.36px;font-weight:400;color:#000;letter-spacing:0.000px;transform:scaleX(0.9690);transform-origin:0 0;-webkit-text-stroke-width:0.45px;">Documentation (1)</div>
<svg style="left:2925.7px;top:1928.6px" width="32" height="32"><use href="#i-doc" x="0" y="0" width="32" height="32"/></svg>
<div class="t" style="left:2981.44px;top:1932.92px;font-size:25.36px;line-height:25.36px;font-weight:400;color:#000;letter-spacing:0.000px;transform:scaleX(0.9580);transform-origin:0 0;-webkit-text-stroke-width:0.45px;">User documentation for Bicycles and colors</div>
<svg style="left:2934px;top:2003.6px" width="16" height="10"><use href="#i-chev" x="0" y="0" width="16" height="10"/></svg>
<svg style="left:2974px;top:1992.6px" width="32" height="32"><use href="#i-res" x="0" y="0" width="32" height="32"/></svg>
<div class="t" style="left:3022.40px;top:1996.92px;font-size:25.36px;line-height:25.36px;font-weight:400;color:#000;letter-spacing:0.000px;transform:scaleX(0.8985);transform-origin:0 0;-webkit-text-stroke-width:0.45px;">Resource (1)</div>
<svg style="left:2925.7px;top:2055.2999999999997px" width="32" height="32"><use href="#i-ebike" x="0" y="0" width="32" height="32"/></svg>
<div class="t" style="left:2980.40px;top:2060.92px;font-size:25.36px;line-height:25.36px;font-weight:400;color:#000;letter-spacing:0.000px;-webkit-text-stroke-width:0.45px;">Look for electrical bike</div>
</div>
<div class="a" style="left:0px;top:0px;width:1px;height:2162px;background:#3a3a3a"></div>
<svg style="left:0px;top:2132px;" width="30" height="30" viewBox="0 2132 30 30"><path d="M0 2142V2162H20A20 20 0 0 1 0 2142Z" fill="#d6d6d6"/></svg>
<svg style="left:3810px;top:2132px;" width="30" height="30" viewBox="3810 2132 30 30"><path d="M3840 2142V2162H3820A20 20 0 0 0 3840 2142Z" fill="#b8b8b8"/></svg>
</body></html>
